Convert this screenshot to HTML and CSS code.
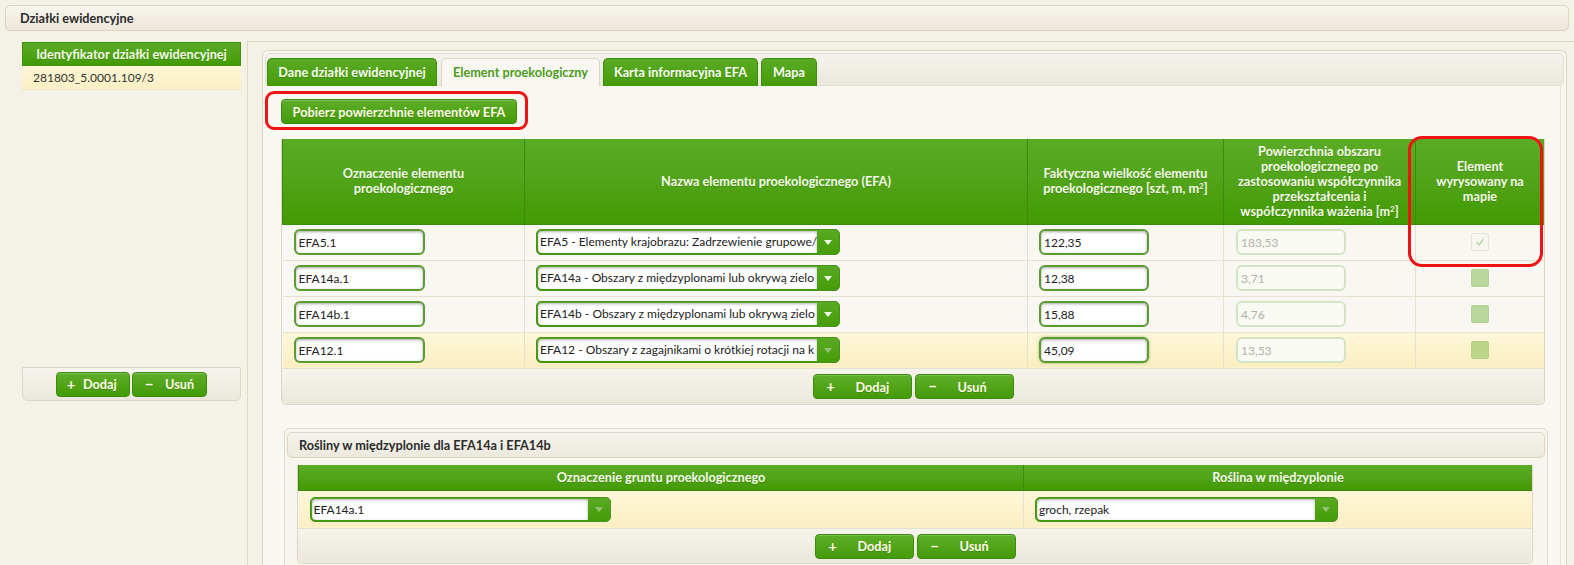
FILE: index.html
```html
<!DOCTYPE html>
<html lang="pl">
<head>
<meta charset="utf-8">
<title>Działki ewidencyjne</title>
<link rel="stylesheet" href="styles.css">
</head>
<body>
<div class="page-header">Działki ewidencyjne</div>
<div class="page-body">
  <aside class="left-col">
    <div class="left-grid">
      <div class="left-head">Identyfikator działki ewidencyjnej</div>
      <div class="left-row">281803_5.0001.109/3</div>
      <div class="left-empty"></div>
      <div class="left-toolbar">
        <button class="btn btn-sm"><span class="ico">+</span>Dodaj</button>
        <button class="btn btn-sm btn-sm2"><span class="ico">−</span>Usuń</button>
      </div>
    </div>
  </aside>
  <main class="right-col">
    <div class="tabpanel">
      <div class="tabstrip">
        <div class="tab t1">Dane działki ewidencyjnej</div>
        <div class="tab t2 active">Element proekologiczny</div>
        <div class="tab t3">Karta informacyjna EFA</div>
        <div class="tab t4">Mapa</div>
      </div>
      <div class="tab-content">
        <div class="mark-row">
          <div class="mark mark-fetch"><button class="btn btn-fetch">Pobierz powierzchnie elementów EFA</button></div>
        </div>
        <div class="grid grid-main">
          <table class="tbl">
            <colgroup><col class="c1"><col class="c2"><col class="c3"><col class="c4"><col class="c5"></colgroup>
            <thead>
              <tr>
                <th>Oznaczenie elementu<br>proekologicznego</th>
                <th>Nazwa elementu proekologicznego (EFA)</th>
                <th>Faktyczna wielkość elementu<br>proekologicznego [szt, m, m<sup>2</sup>]</th>
                <th>Powierzchnia obszaru<br>proekologicznego po<br>zastosowaniu współczynnika<br>przekształcenia i<br>współczynnika ważenia [m<sup>2</sup>]</th>
                <th>Element<br>wyrysowany na<br>mapie</th>
              </tr>
            </thead>
            <tbody>
              <tr>
                <td><input class="inp inp-id" value="EFA5.1"></td>
                <td><div class="combo combo-main"><span class="combo-text">EFA5 - Elementy krajobrazu: Zadrzewienie grupowe/</span><span class="combo-btn"><svg width="8" height="5" viewBox="0 0 8 5"><path d="M0 0h8L4 5z" fill="#eef7e6"/></svg></span></div></td>
                <td class="pl-num"><input class="inp inp-num" value="122,35"></td>
                <td class="pl-dis"><input class="inp inp-dis" value="183,53" disabled></td>
                <td class="ctr"><span class="chk chk-dis"><svg width="10" height="8" viewBox="0 0 10 8"><path d="M1.5 4.2l2.5 2.5 4.5-5.5" fill="none" stroke="#b8dca4" stroke-width="1.6"/></svg></span></td>
              </tr>
              <tr>
                <td><input class="inp inp-id" value="EFA14a.1"></td>
                <td><div class="combo combo-main"><span class="combo-text">EFA14a - Obszary z międzyplonami lub okrywą zielo</span><span class="combo-btn"><svg width="8" height="5" viewBox="0 0 8 5"><path d="M0 0h8L4 5z" fill="#eef7e6"/></svg></span></div></td>
                <td class="pl-num"><input class="inp inp-num" value="12,38"></td>
                <td class="pl-dis"><input class="inp inp-dis" value="3,71" disabled></td>
                <td class="ctr"><span class="chk chk-on"></span></td>
              </tr>
              <tr>
                <td><input class="inp inp-id" value="EFA14b.1"></td>
                <td><div class="combo combo-main"><span class="combo-text">EFA14b - Obszary z międzyplonami lub okrywą zielo</span><span class="combo-btn"><svg width="8" height="5" viewBox="0 0 8 5"><path d="M0 0h8L4 5z" fill="#eef7e6"/></svg></span></div></td>
                <td class="pl-num"><input class="inp inp-num" value="15,88"></td>
                <td class="pl-dis"><input class="inp inp-dis" value="4,76" disabled></td>
                <td class="ctr"><span class="chk chk-on"></span></td>
              </tr>
              <tr class="sel">
                <td><input class="inp inp-id" value="EFA12.1"></td>
                <td><div class="combo combo-main"><span class="combo-text">EFA12 - Obszary z zagajnikami o krótkiej rotacji na k</span><span class="combo-btn"><svg width="8" height="5" viewBox="0 0 8 5"><path d="M0 0h8L4 5z" fill="#93c274"/></svg></span></div></td>
                <td class="pl-num"><input class="inp inp-num inp-focus" value="45,09"></td>
                <td class="pl-dis"><input class="inp inp-dis" value="13,53" disabled></td>
                <td class="ctr"><span class="chk chk-on chk-sel"></span></td>
              </tr>
            </tbody>
          </table>
          <div class="grid-footer">
            <button class="btn btn-wide"><span class="ico">+</span>Dodaj</button>
            <button class="btn btn-wide"><span class="ico">−</span>Usuń</button>
          </div>
          <div class="mark mark-col"></div>
        </div>

        <section class="sub">
          <div class="sub-header">Rośliny w międzyplonie dla EFA14a i EFA14b</div>
          <div class="grid grid-sub">
            <table class="tbl tbl-sub">
              <colgroup><col class="s1"><col class="s2"></colgroup>
              <thead>
                <tr><th>Oznaczenie gruntu proekologicznego</th><th>Roślina w międzyplonie</th></tr>
              </thead>
              <tbody>
                <tr class="sel">
                  <td><div class="combo combo-sub1"><span class="combo-text">EFA14a.1</span><span class="combo-btn"><svg width="8" height="5" viewBox="0 0 8 5"><path d="M0 0h8L4 5z" fill="#93c274"/></svg></span></div></td>
                  <td><div class="combo combo-sub2"><span class="combo-text">groch, rzepak</span><span class="combo-btn"><svg width="8" height="5" viewBox="0 0 8 5"><path d="M0 0h8L4 5z" fill="#93c274"/></svg></span></div></td>
                </tr>
              </tbody>
            </table>
            <div class="grid-footer grid-footer-sub">
              <button class="btn btn-wide"><span class="ico">+</span>Dodaj</button>
              <button class="btn btn-wide"><span class="ico">−</span>Usuń</button>
            </div>
          </div>
        </section>
      </div>
    </div>
  </main>
</div>
</body>
</html>
```
FILE: styles.css
```css
* { box-sizing: border-box; }
html, body { margin: 0; padding: 0; }
body {
  width: 1574px;
  height: 565px;
  overflow: hidden;
  background: #f4f1e6;
  font-family: Lato, "Open Sans", sans-serif;
  font-size: 12px;
  color: #333;
}

.page-header {
  margin: 5px 5px 0;
  height: 26px;
  border: 1px solid #ddd4bf;
  border-radius: 5px;
  background: linear-gradient(#f8f5ee, #ece7da);
  padding-left: 14px;
  line-height: 24px;
  font-size: 12.7px;
  font-weight: bold;
  color: #2b2b2b;
}

.page-body { display: flex; margin-top: 10px; }

/* left column */
.left-col { width: 247px; flex: none; padding: 1px 6px 0 22px; }
.left-grid { width: 219px; }
.left-head {
  height: 24px;
  background: linear-gradient(#5bab25, #439b05);
  border: 1px solid #3f900b;
  color: #f4f9e8;
  font-size: 12.7px;
  font-weight: bold;
  text-align: center;
  line-height: 22px;
  text-shadow: 0 1px 0 rgba(0,0,0,.15);
}
.left-row {
  height: 24px;
  background: linear-gradient(#fdf6d6, #fbefc4);
  border-bottom: 1px solid #f0e6c6;
  padding-left: 11px;
  line-height: 24px;
  color: #333;
}
.left-empty { height: 277px; }
.left-toolbar {
  height: 34px;
  border: 1px solid #ddd6c4;
  border-radius: 0 0 5px 5px;
  background: linear-gradient(#f6f4ed, #ebe7db);
  display: flex;
  justify-content: center;
  align-items: center;
  gap: 2px;
}

/* buttons */
.btn {
  display: inline-flex;
  align-items: center;
  height: 25px;
  border: 1px solid #3b8b0c;
  border-radius: 4px;
  background: linear-gradient(#5fae2a, #439b07);
  box-shadow: inset 0 1px 0 rgba(255,255,255,.2);
  color: #fffbe6;
  font-family: inherit;
  font-size: 12.7px;
  font-weight: bold;
  padding: 0;
  margin: 0;
  text-shadow: 0 1px 0 rgba(0,0,0,.15);
}
.btn .ico { display: inline-block; width: 10px; text-align: center; font-size: 15px; line-height: 1; }
.btn-sm { height: 25px; width: 74px; padding-left: 9px; }
.btn-sm2 { width: 75px; padding-left: 11px; }
.btn-sm .ico { margin-right: 7px; }
.btn-sm2 .ico { margin-right: 11px; }
.btn-wide { width: 99px; padding-left: 12px; }
.btn-wide .ico { margin-right: 20px; }
.btn-fetch { width: 236px; justify-content: center; }

/* right column */
.right-col {
  flex: 1;
  border-left: 1px solid #e0d9c6;
  border-top: 1px solid #e0d9c6;
  padding: 8px 7px 0 14px;
  height: 524px;
}
.tabpanel {
  height: 100%;
  border: 1px solid #dcd5c2;
  border-bottom: none;
  border-radius: 6px 6px 0 0;
  background: #f8f7f1;
}
.tabstrip {
  margin: 2px 2px 0;
  height: 33px;
  border: 1px solid #e3ddcc;
  border-radius: 5px;
  background: linear-gradient(#f5f3ed, #ebe7db);
  display: flex;
  align-items: flex-end;
  gap: 3px;
  padding-left: 1px;
}
.tab {
  height: 28px;
  margin-bottom: -1px;
  line-height: 27px;
  text-align: center;
  border: 1px solid #3c8c0e;
  border-bottom: none;
  border-radius: 5px 5px 0 0;
  background: linear-gradient(#5bab25, #449c06);
  color: #fbfdf5;
  font-size: 12.7px;
  font-weight: bold;
  white-space: nowrap;
  text-shadow: 0 1px 0 rgba(0,0,0,.15);
}
.t1 { width: 170px; margin-right: 1px; }
.t2 { width: 159px; }
.t3 { width: 155px; }
.t4 { width: 56px; }
.tab.active {
  background: #f8f7f1;
  border-color: #ddd6c4;
  color: #4c9b1d;
  text-shadow: none;
}

.tab-content {
  height: 480px;
  margin-right: 5px;
  border-right: 1px solid #e6e0d0;
  padding: 5px 0 0 2px;
}
.mark { border: 3px solid #f01313; pointer-events: none; }
.mark-row { display: flex; }
.mark-fetch { border-radius: 9px; padding: 5px 8px 3px 13px; }

.grid-main {
  position: relative;
  margin: 9px 15px 0 16px;
  border: 1px solid #ddd6c4;
  border-top: none;
  border-radius: 0 0 5px 5px;
}
.mark-col {
  position: absolute;
  left: 1126px;
  top: -3px;
  width: 135px;
  height: 131px;
  border-radius: 14px;
}

.tbl { width: 100%; border-collapse: collapse; table-layout: fixed; }
.c1 { width: 242px; }
.c2 { width: 503px; }
.c3 { width: 196px; }
.c4 { width: 192px; }
.c5 { width: auto; }
.tbl th {
  height: 85px;
  padding: 0 2px;
  background: linear-gradient(#5bab25 0%, #52a41a 45%, #429a02 100%);
  border-left: 1px solid #3b8a0c;
  border-bottom: 1px solid #3b8a0c;
  color: #f5faea;
  font-size: 12.7px;
  font-weight: bold;
  line-height: 15px;
  text-align: center;
  vertical-align: middle;
  white-space: nowrap;
  text-shadow: 0 1px 0 rgba(0,0,0,.15);
}
.tbl sup { font-size: 8px; line-height: 0; vertical-align: 4px; }
.tbl td {
  height: 36px;
  padding: 0 0 0 11px;
  background: #f8f7f1;
  border-top: 1px solid #e6e0cf;
  border-left: 1px solid #e6e0cf;
  vertical-align: middle;
}
.tbl td:first-child { border-left: none; }
.tbl tr.sel td { background: linear-gradient(#fdf7da, #fbeec1); }
.tbl td.pl-num { padding-left: 11px; }
.tbl td.pl-dis { padding-left: 12px; }
.tbl td.ctr { padding: 0; text-align: center; }

.inp {
  display: block;
  height: 26px;
  border: 2px solid #5b9b30;
  border-radius: 6px;
  background: #fff;
  box-shadow: inset 0 1px 3px rgba(0,0,0,.35);
  padding: 0 0 0 3px;
  font-family: inherit;
  font-size: 12px;
  color: #222;
  outline: none;
}
.inp-id { width: 131px; }
.inp-num { width: 110px; }
.inp-focus { box-shadow: inset 0 1px 3px rgba(0,0,0,.35), 0 0 3px rgba(90,150,40,.6); }
.inp-dis {
  width: 110px;
  border-color: #d2e4c3;
  background: #fafaf5;
  box-shadow: none;
  color: #b3b1a8;
}

.combo {
  display: flex;
  height: 26px;
  border: 1px solid #46921a;
  border-radius: 5px;
  background: linear-gradient(#5aaa24, #449c06);
  overflow: hidden;
}
.combo-main { width: 304px; }
.combo-text {
  flex: 1;
  min-width: 0;
  margin: 1px 0 1px 1px;
  border-radius: 4px 0 0 4px;
  background: #fff;
  box-shadow: inset 0 1px 3px rgba(0,0,0,.3);
  padding-left: 2px;
  line-height: 22px;
  white-space: nowrap;
  overflow: hidden;
  color: #222;
}
.combo-btn {
  width: 22px;
  flex: none;
  display: flex;
  align-items: center;
  justify-content: center;
}

.chk {
  display: inline-flex;
  align-items: center;
  justify-content: center;
  width: 18px;
  height: 18px;
  border-radius: 2px;
  vertical-align: middle;
}
.chk-dis { border: 1px solid #e3e3d8; background: #f6f6ef; }
.chk-on { background: #b7d79b; border: 1px solid #b0d294; }
.chk-sel { background: #bcd489; border-color: #b6cf82; }

.grid-footer {
  height: 36px;
  background: linear-gradient(#f6f4ed, #ebe7db);
  border-top: 1px solid #e6e0cf;
  border-radius: 0 0 5px 5px;
  display: flex;
  justify-content: center;
  align-items: center;
  gap: 3px;
}

/* sub section */
.sub {
  margin: 23px 12px 0 19px;
  height: 200px;
  border: 1px solid #e0d9c7;
  border-radius: 6px;
  background: #f7f5ee;
  padding: 3px 2px 0;
}
.sub-header {
  height: 26px;
  border: 1px solid #ddd6c4;
  border-radius: 5px;
  background: linear-gradient(#f6f4ee, #ece8dc);
  padding-left: 11px;
  line-height: 24px;
  font-size: 12.7px;
  font-weight: bold;
  color: #2b2b2b;
}
.grid-sub {
  margin: 7px 12px 0 10px;
  border: 1px solid #ddd6c4;
  border-top: none;
  border-radius: 0 0 5px 5px;
}
.s1 { width: 725px; }
.s2 { width: auto; }
.tbl-sub th { height: 25px; }
.tbl-sub td { height: 38px; }
.combo-sub1 { width: 301px; height: 25px; }
.combo-sub2 { width: 303px; height: 25px; }
.grid-footer-sub { height: 35px; }
```
